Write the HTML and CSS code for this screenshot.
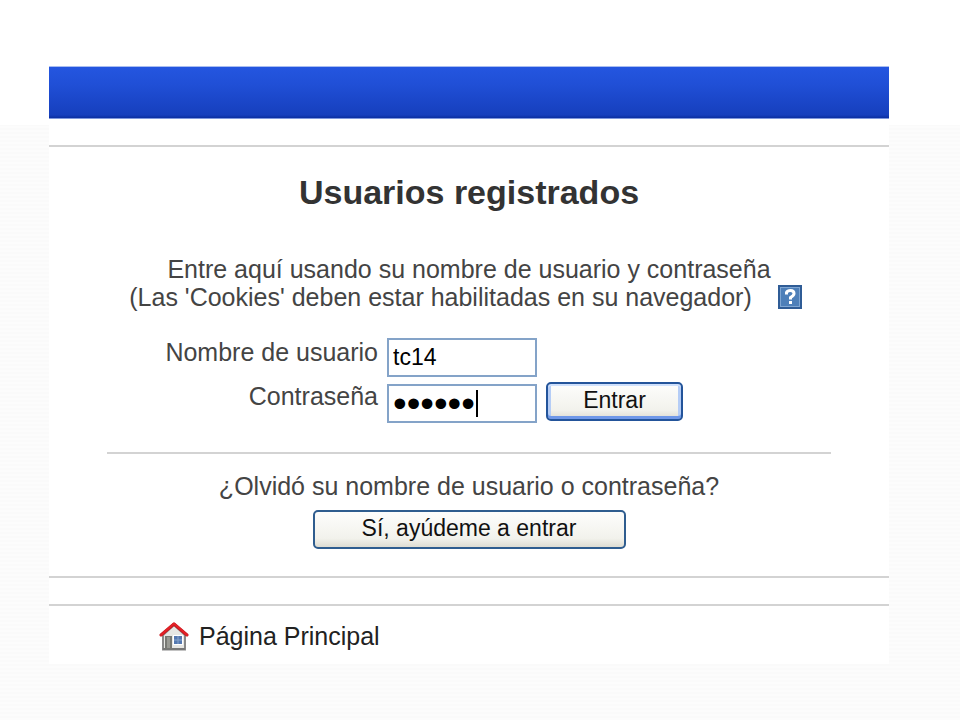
FILE: index.html
```html
<!DOCTYPE html>
<html lang="es">
<head>
    <meta charset="UTF-8" />
    <meta name="viewport" content="width=device-width, initial-scale=1.0" />
    <title>Usuarios registrados</title>
    <link rel="stylesheet" href="styles.css">
</head>
<body>
    <div class="page">
        <header class="top-bar"></header>

        <main class="login">
            <h1>Usuarios registrados</h1>

            <div class="intro">
                <p>Entre aquí usando su nombre de usuario y contraseña</p>
                <p class="cookies">
                    <span>(Las 'Cookies' deben estar habilitadas en su navegador)</span>
                    <a class="help" href="#" aria-label="Ayuda">
                        <svg width="26" height="26" viewBox="0 0 26 26">
                            <rect x="1" y="1" width="24" height="24" fill="#2f5c96" />
                            <rect x="3" y="3" width="20" height="20" fill="#7fa6d3" />
                            <rect x="4" y="4" width="18" height="18" fill="#4d7fb9" />
                            <path d="M9.5 10.5V8.500Q10.500 6.500 13.500 6.500Q17 6.500 17 9.500Q17 11.500 13.500 13.500V15.500" fill="none" stroke="#fff" stroke-width="3" />
                            <rect x="12" y="17" width="3" height="3" fill="#fff" />
                        </svg>
                    </a>
                </p>
            </div>

            <!-- Login form -->
            <form class="login-form">
                <label for="username">Nombre de usuario</label>
                <input type="text" id="username" value="tc14">

                <label for="password">Contraseña</label>
                <div class="password-field">
                    <input type="password" id="password" value="123456">
                    <span class="caret"></span>
                </div>
                <button type="submit" class="btn btn-default">Entrar</button>
            </form>

            <!-- Forgotten password -->
            <form class="forgot">
                <p>¿Olvidó su nombre de usuario o contraseña?</p>
                <button type="submit" class="btn btn-wide">Sí, ayúdeme a entrar</button>
            </form>
        </main>

        <footer class="footer">
            <a href="#">
                <svg width="30" height="30" viewBox="0 0 30 30">
                    <path d="M4 14L15 4L26 14V28.500H4Z" fill="#e6e6e3" stroke="#888" stroke-width="2" />
                    <path d="M4 28H26" stroke="#777" stroke-width="2" />
                    <rect x="6" y="15" width="7" height="13" fill="#777873" />
                    <rect x="8" y="16" width="3" height="11" fill="#999a94" />
                    <rect x="14" y="14" width="10" height="10" fill="#fff" />
                    <rect x="15" y="15" width="8" height="8" fill="#5478b0" />
                    <path d="M15 19H23M19 15V23" stroke="#87a4cc" />
                    <path d="M2 14L15 3L28 14" fill="none" stroke="#c5161c" stroke-width="3" stroke-linejoin="round" stroke-linecap="round" />
                    <path d="M2 14L15 2.500L28 14" fill="none" stroke="#e32228" stroke-width="2" stroke-linejoin="round" stroke-linecap="round" />
                </svg>
                <span>Página Principal</span>
            </a>
        </footer>
    </div>
</body>
</html>
```

FILE: styles.css
```css
body, html {
    margin: 0;
    padding: 0;
    min-height: 100%;
}

html {
    background-color: #fff;
}

body {
    min-height: 100vh;
    box-sizing: border-box;
    padding: 66px 71px 56px 49px;
    font-family: "Liberation Sans", Arial, sans-serif;
    font-size: 25px;
    line-height: 28px;
    color: #444;
    /* Faint paper texture below the white top band */
    background: linear-gradient(#fff, #fff) 0 0 / 100% 125px no-repeat,
        repeating-linear-gradient(#fafafa 0, #fafafa 2px, #fcfcfc 2px, #fcfcfc 4px);
}

p {
    margin: 0;
}

.page {
    background-color: #fff;
}

.top-bar {
    height: 51px;
    border-top: 1px solid #a9bdf0;
    border-bottom: 1px solid #7f97dc;
    background: linear-gradient(#2456e0, #204fd6 35%, #163fbd 94%, #0b2fa0);
}

.login {
    margin-top: 26px;
    padding: 25px 0 27px;
    border-top: 2px solid #d3d3d3;
    border-bottom: 2px solid #d3d3d3;
    text-align: center;
}

h1 {
    margin: 0;
    font-size: 34px;
    line-height: 40px;
    color: #333;
}

.intro {
    margin-top: 43px;
}

.cookies {
    display: flex;
    justify-content: center;
    align-items: center;
    gap: 25px;
    padding-right: 6px;
    white-space: nowrap;
}

.help, .help svg {
    display: block;
}

.login-form {
    display: grid;
    grid-template-columns: 329fr 150px 343fr;
    gap: 5px 9px;
    margin-top: 27px;
}

.login-form label {
    grid-column: 1;
    text-align: right;
}

.login-form input {
    display: block;
    width: 100%;
    height: 39px;
    box-sizing: border-box;
    padding: 0 4px;
    border: 2px solid #84a3c8;
    background-color: #fff;
    font-family: inherit;
    font-size: 23px;
    color: #000;
}

.password-field {
    position: relative;
    padding-top: 2px;
}

/* Larger font size so the dots are big */
.login-form input[type="password"] {
    font-size: 39px;
}

/* Text cursor after the last dot */
.caret {
    position: absolute;
    left: 89px;
    top: 8px;
    width: 2px;
    height: 27px;
    background-color: #000;
}

.btn {
    height: 39px;
    padding: 0 0 3px;
    border: 2px solid #2f5d8f;
    border-radius: 5px;
    background: linear-gradient(#fdfdfc, #f2f2ec 75%, #dedcd2);
    font-family: inherit;
    font-size: 23px;
    color: #111;
}

.btn-default {
    justify-self: start;
    width: 137px;
    border-color: #23549a;
    box-shadow: inset 0 2px #cfe0fb, inset 0 -3px #6f98e8, inset 3px 0 #b5cdf6, inset -3px 0 #b5cdf6;
}

.btn-wide {
    width: 313px;
    margin-top: 10px;
}

.forgot {
    margin: 29px 58px 0;
    padding-top: 18px;
    border-top: 2px solid #d3d3d3;
}

.footer {
    margin-top: 26px;
    padding: 15px 110px 8px;
    border-top: 2px solid #d3d3d3;
}

.footer a {
    display: inline-flex;
    align-items: center;
    gap: 10px;
    color: #222;
    text-decoration: none;
}
```
